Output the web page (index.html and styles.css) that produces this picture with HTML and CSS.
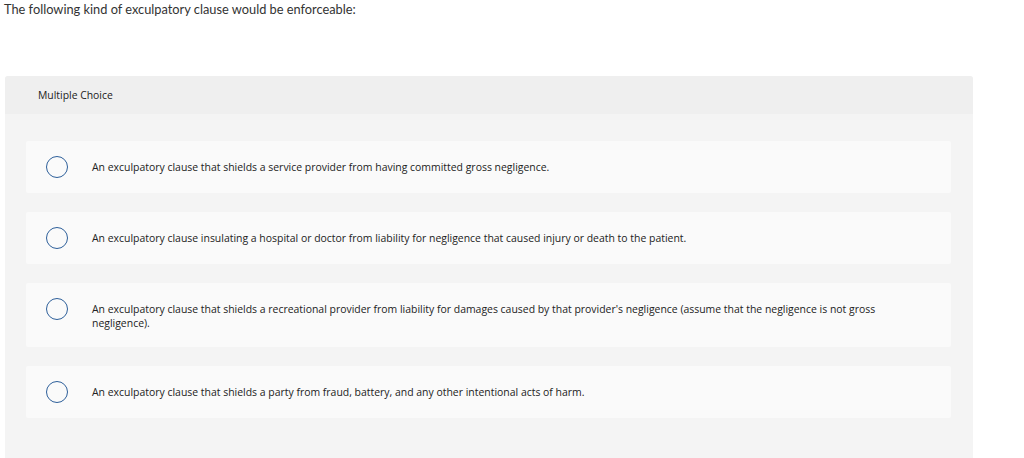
FILE: index.html
```html
<!DOCTYPE html>
<html>
<head>
<meta charset="utf-8">
<link rel="stylesheet" href="styles.css">
</head>
<body>
<p class="question">The following kind of exculpatory clause would be enforceable:</p>
<div class="card">
  <div class="card-head">Multiple Choice</div>
  <div class="card-body">
    <div class="option"><span class="radio"></span><span class="label">An exculpatory clause that shields a service provider from having committed gross negligence.</span></div>
    <div class="option"><span class="radio"></span><span class="label">An exculpatory clause insulating a hospital or doctor from liability for negligence that caused injury or death to the patient.</span></div>
    <div class="option"><span class="radio"></span><span class="label">An exculpatory clause that shields a recreational provider from liability for damages caused by that provider's negligence (assume that the negligence is not gross negligence).</span></div>
    <div class="option"><span class="radio"></span><span class="label">An exculpatory clause that shields a party from fraud, battery, and any other intentional acts of harm.</span></div>
  </div>
</div>
</body>
</html>
```
FILE: styles.css
```css
html, body {
  margin: 0;
  padding: 0;
  background: #fff;
}
body {
  font-family: "Open Sans", Arial, sans-serif;
  color: #333;
  padding: 0 51px 0 5px;
}
.question {
  margin: 0 0 0 -1px;
  padding-top: 1px;
  font-family: Lato, "Open Sans", Arial, sans-serif;
  font-size: 12.8px;
  line-height: 16px;
  color: #333;
}
.card {
  margin-top: 59px;
  background: #f4f4f4;
  border-radius: 3px 3px 0 0;
  overflow: hidden;
}
.card-head {
  height: 38px;
  display: flex;
  align-items: center;
  padding-left: 33px;
  background: #efefef;
  font-size: 10.4px;
  color: #222;
}
.card-body {
  padding: 27px 22px 60px 21px;
  display: flex;
  flex-direction: column;
  gap: 19px;
}
.option {
  background: #fafafa;
  border-radius: 2px;
  padding: 15px 66px 15px 20px;
  display: flex;
  align-items: flex-start;
  min-height: 22px;
}
.radio {
  flex: none;
  width: 20px;
  height: 20px;
  border: 1.3px solid #2d5f9a;
  border-radius: 50%;
  box-sizing: content-box;
  margin-right: 24px;
}
.label {
  font-size: 10.45px;
  line-height: 14px;
  padding: 4px 0 2px;
  color: #222;
}
```
